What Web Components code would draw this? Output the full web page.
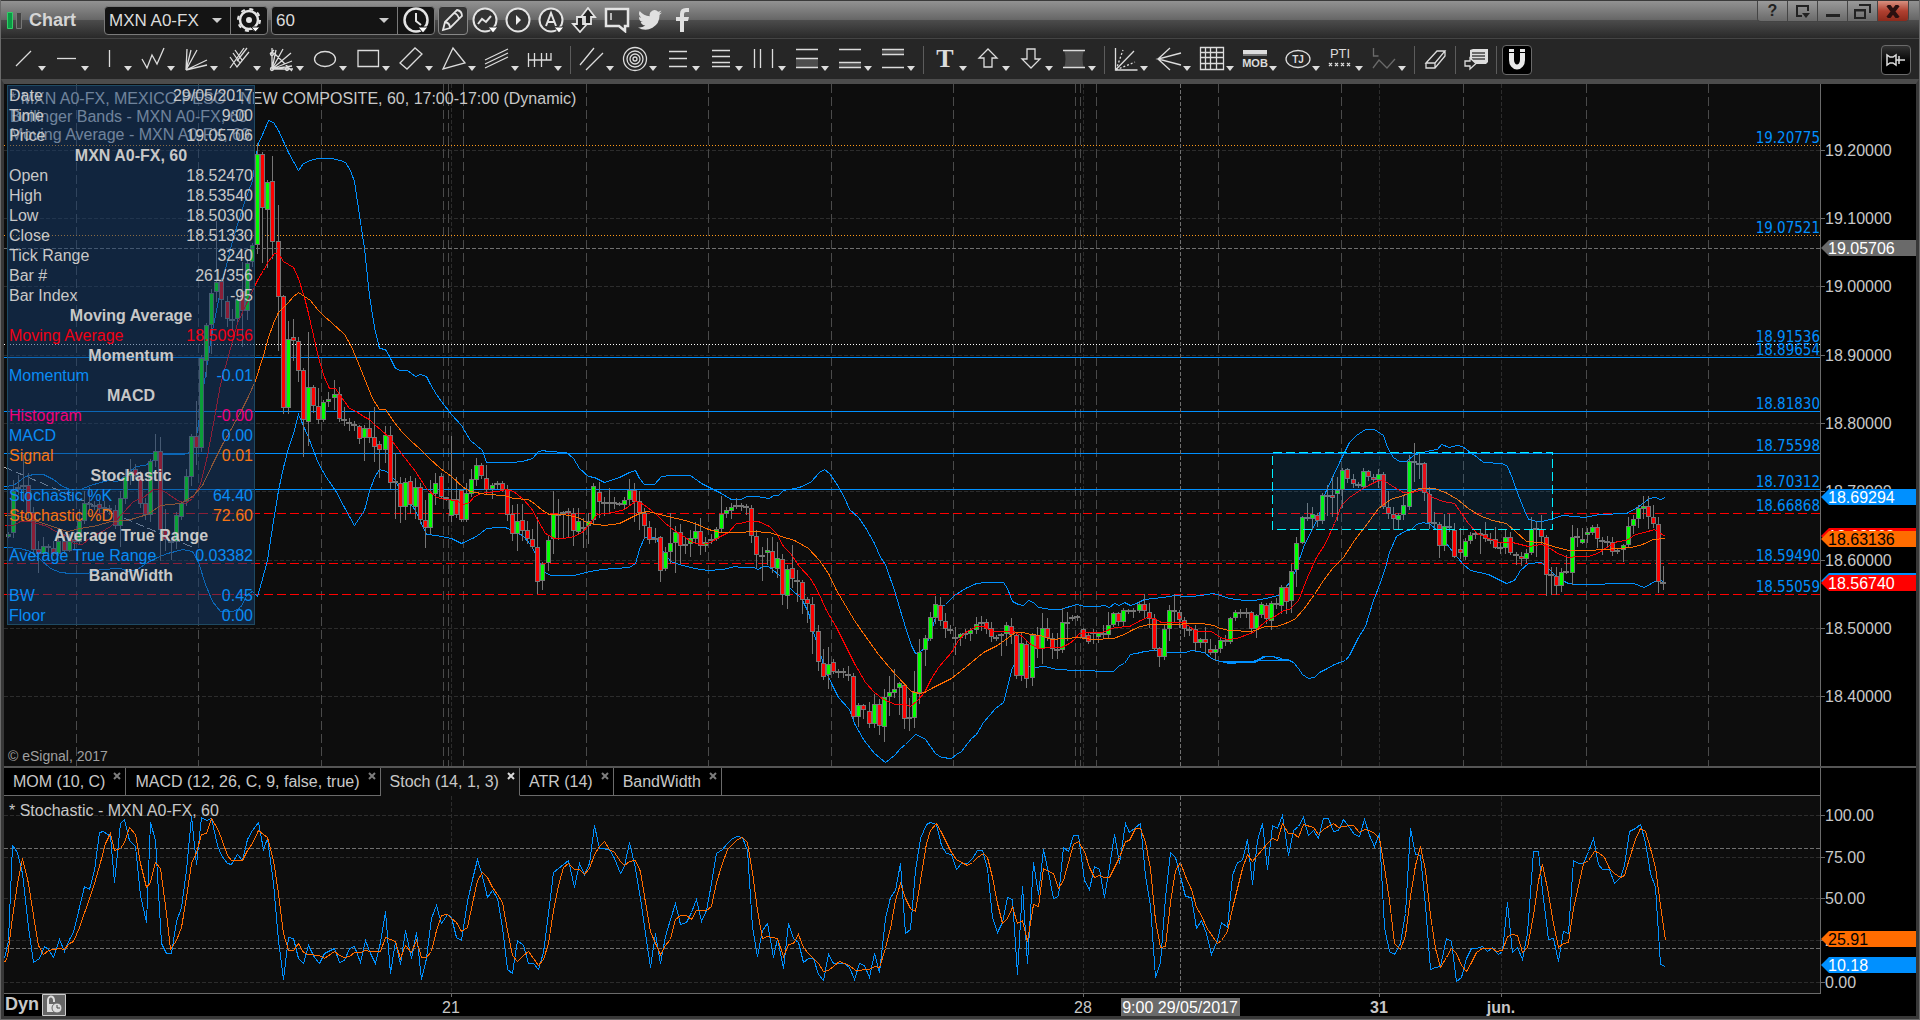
<!DOCTYPE html>
<html lang="es">
<head>
<meta charset="utf-8">
<title>Chart - MXN A0-FX</title>
<style>
html,body{margin:0;height:100%;background:#000}
body{font-family:"Liberation Sans",Arial,sans-serif;color:#c8c8c8;font-size:16px}
</style>
</head>
<body>
<chart-window></chart-window>
<script>
const define=(name,css,html,ready)=>{
  const t=document.createElement('template');
  t.innerHTML='<style>*{box-sizing:border-box}'+css+'</style>'+html;
  customElements.define(name,class extends HTMLElement{
    constructor(){super();this.attachShadow({mode:'open'}).append(t.content.cloneNode(true));}
    connectedCallback(){if(ready&&!this.done){this.done=true;ready.call(this,this.shadowRoot);}}
  });
};
const BTN='button{appearance:none;background:none;border:0;padding:0;margin:0;color:inherit;font:inherit;display:flex;align-items:center}';

/* ---------- series: each chunk is [originX, originY, scaleX, scaleY, points] ---------- */
const C4=[-4,-4,3,2.8],C5=[236,16,2.8,3],C6=[736,336,2.8,3],C7=[1216,316,2.24,3];
const S1=[-4,-56,2.1778,3],S2=[476,4,2.529,3],S3=[896,4,3,3],S4=[1276,-6,2.45,3];
const trace=(chunks)=>chunks.map(([o,s])=>s.trim().split(/\s+/).map(p=>{
  const [x,y]=p.split(',').map(Number);
  return Math.round(o[0]+x/o[2])+.5+','+(Math.round(o[1]+y/o[3])+.5);
}).join(' ')).join(' ');
const line=(chunks,c)=>`<polyline points="${trace(chunks)}" fill="none" stroke="${c}"/>`;

const upper=[[C4,'12,1137 40,1133 75,1110 100,1102 130,1102 160,1118 185,1138 210,1145 240,1145 270,1135 300,1125 325,1120 350,1122 375,1105 405,1080 435,1078 465,1058 490,1047 515,1048 550,1048 575,1040 590,980 610,860 635,700 665,560 700,440 730,350 757,280'],
[C5,'45,160 49,130 63,97 78,60 91,66 105,90 120,123 134,157 149,182 163,209 177,190 196,181 215,175 255,175 280,180 293,187 307,210 320,242 334,345 348,445 362,585 376,680 390,745 405,746 418,768 433,805 447,811 467,811 490,828 505,823 520,829 533,852 548,882 563,903 592,943 620,975 645,1020 678,1051 690,1086 747,1087 762,1085 790,1083 818,1073 833,1054 848,1051 860,1054 913,1057 933,1074 950,1103 975,1129 990,1130 1018,1147 1062,1132 1090,1115 1105,1111 1118,1133 1132,1153 1160,1153 1180,1129 1205,1126 1260,1126 1290,1150 1340,1177 1375,1197 1395,1198'],
[C6,'0,238 20,229 45,228 80,234 92,226 105,225 120,210 150,203 165,202 195,186 220,157 234,148 250,160 270,190 290,232 305,267 330,290 350,320 375,370 392,412 407,432 430,510 445,560 465,630 480,675 491,698 505,693 519,680 533,640 547,590 561,562 575,553 600,525 630,503 660,489 690,485 735,485 748,503 762,542 778,552 792,556 806,541 820,545 835,562 870,568 895,568 940,553 965,559 1000,559 1020,556 1034,560 1048,549 1062,554 1076,545 1091,556 1110,548 1130,537 1160,535 1200,529 1219,526 1240,527 1262,529 1290,524 1325,520 1345,524 1370,533 1410,541 1440,541 1470,533 1505,526 1525,505 1545,470 1555,450'],
[C7,'185,440 205,385 220,350 235,275 250,230 268,180 288,125 305,105 324,88 345,88 365,105 375,140 388,170 400,182 416,183 432,165 445,158 470,151 485,148 496,132 512,140 528,136 543,137 560,155 575,172 590,187 632,190 643,198 655,235 668,285 680,330 690,357 710,364 722,362 745,355 765,346 795,347 815,352 850,342 910,340 935,322 962,293 975,292 985,296 997,292']];
const lower=[[C4,'12,1307 60,1310 90,1318 120,1340 150,1365 180,1377 210,1380 260,1380 300,1370 360,1365 385,1375 410,1370 440,1350 470,1335 500,1325 525,1318 545,1312 575,1320 595,1350 615,1410 635,1460 660,1488 700,1488 720,1475 740,1440 757,1430 770,1445'],
[C5,'60,1445 75,1380 90,1280 105,1170 120,1100 133,1045 148,1000 163,943 190,1010 219,1090 240,1130 265,1170 290,1222 320,1274 348,1230 362,1172 376,1130 390,1108 410,1112 430,1137 450,1172 490,1230 520,1303 548,1305 592,1315 620,1330 655,1310 672,1300 690,1284 720,1280 742,1280 790,1305 815,1335 833,1380 850,1415 870,1426 935,1426 965,1415 1010,1408 1090,1400 1105,1390 1118,1348 1132,1312 1163,1312 1180,1345 1205,1382 1230,1392 1270,1405 1310,1411 1350,1408 1387,1397'],
[C6,'0,440 35,440 50,448 62,438 78,437 90,447 110,465 125,490 145,510 170,535 190,575 205,635 220,690 234,740 255,790 275,830 305,868 320,910 345,958 375,1000 405,1025 432,1005 447,985 463,973 491,943 505,947 519,958 547,998 563,1010 592,1015 605,1003 620,993 648,955 662,943 680,905 715,863 735,845 748,800 762,740 770,730 820,742 855,739 885,746 940,750 1045,752 1060,735 1076,730 1091,701 1108,700 1130,694 1160,691 1190,695 1210,697 1245,697 1262,691 1300,697 1320,713 1345,724 1370,728 1440,724 1465,709 1480,707 1505,710 1520,718 1535,719'],
[C7,'0,784 30,787 78,785 92,775 103,767 122,769 130,776 150,778 163,787 175,805 183,823 197,835 210,830 222,817 240,805 255,792 280,780 290,765 308,710 325,678 343,600 358,545 370,500 378,455 395,407 412,392 428,387 440,373 455,367 470,373 485,390 505,427 530,470 545,493 560,510 600,522 640,548 658,540 672,510 690,488 720,487 735,505 750,525 765,540 780,549 800,552 925,550 950,562 965,548 980,537 997,545']];
const fastMa=[[C4,'12,1247 40,1247 60,1235 85,1235 110,1240 140,1248 165,1262 200,1278 220,1297 245,1300 270,1280 300,1265 330,1250 370,1210 400,1180 430,1168 460,1145 480,1145 500,1155 530,1175 555,1185 575,1170 600,1130 620,1050 640,960 660,850 680,780 710,680 740,620 765,570'],
[C5,'50,535 63,510 77,483 95,460 105,460 120,483 149,502 163,535 178,590 190,640 205,705 218,770 234,830 248,865 265,865 276,882 305,925 325,932 345,948 362,957 376,972 395,990 418,1012 450,1060 490,1113 520,1165 548,1192 575,1196 606,1200 625,1213 640,1205 655,1188 675,1178 690,1176 720,1172 745,1168 765,1173 790,1195 815,1225 835,1262 855,1300 880,1315 905,1313 935,1308 960,1293 975,1275 1000,1242 1045,1235 1075,1227 1105,1204 1120,1205 1140,1220 1165,1243 1190,1270 1215,1290 1245,1310 1265,1327 1290,1331 1310,1330 1345,1307 1365,1295 1390,1270'],
[C6,'0,310 20,302 50,302 80,317 100,340 120,378 140,400 165,438 195,475 215,510 240,570 265,615 290,670 320,730 350,785 375,815 400,837 435,853 463,852 477,858 495,840 515,815 535,773 555,740 590,695 610,660 630,636 660,619 680,619 705,634 765,634 790,648 810,668 835,685 870,680 900,682 920,668 935,657 950,640 980,637 1010,636 1050,622 1090,619 1120,600 1140,592 1160,593 1180,607 1205,605 1235,606 1255,615 1275,632 1320,632'],
[C7,'0,710 15,716 35,713 75,695 100,662 125,645 140,630 155,627 175,600 195,530 215,470 235,430 255,370 270,315 290,290 315,267 335,253 355,240 370,243 390,262 410,275 430,275 455,268 475,290 500,303 525,310 535,330 555,370 575,400 600,415 625,425 655,427 690,439 720,433 740,445 755,460 780,470 800,467 825,469 845,458 870,438 890,422 910,420 930,403 950,396 973,388 997,408']];
const slowMa=[[C4,'12,1218 50,1218 90,1228 130,1240 165,1252 200,1262 240,1255 290,1245 330,1235 380,1232 440,1215 480,1190 540,1185 575,1165 605,1135 635,1075 665,1020 690,980 720,930 745,885 765,840'],
[C5,'63,765 77,710 91,668 105,637 120,620 133,605 145,590 163,577 178,587 195,600 215,628 234,648 255,665 290,703 308,733 325,775 348,835 370,895 390,926 405,928 430,965 450,993 475,1020 505,1048 530,1075 560,1105 592,1128 625,1160 645,1172 690,1183 740,1184 765,1193 805,1198 825,1212 845,1230 865,1241 905,1243 945,1250 975,1270 1020,1276 1060,1270 1090,1255 1118,1239 1140,1234 1165,1238 1195,1247 1245,1260 1280,1273 1310,1287 1345,1296 1390,1297'],
[C6,'0,337 30,334 80,335 115,348 150,360 190,383 220,420 245,460 270,510 295,555 320,600 345,640 385,702 435,763 480,813 500,820 515,817 540,802 590,775 630,742 680,696 720,674 750,650 770,637 790,635 815,643 840,645 870,658 945,652 985,656 1045,655 1075,642 1095,629 1120,617 1145,613 1230,613 1245,610 1290,610 1325,616'],
[C7,'0,685 20,690 70,692 100,679 125,678 145,668 165,658 185,627 210,583 230,540 250,505 275,470 300,420 330,370 355,325 380,297 410,285 430,274 445,263 480,264 505,277 530,297 555,325 580,345 610,360 640,370 660,393 685,423 720,425 745,437 780,450 825,451 860,447 920,440 945,432 970,417 997,415']];
const stochK=[[S1,'9,655 17,600 27,315 38,337 49,400 60,560 71,667 84,654 95,618 105,627 116,650 128,597 139,633 150,598 160,577 172,500 183,438 194,447 205,390 215,275 225,274 239,288 249,425 261,248 271,238 282,300 295,318 305,465 317,545 327,247 338,300 350,608 361,640 372,640 383,542 394,500 405,390 416,228 427,373 438,230 449,240 460,234 472,315 482,345 494,370 504,373 516,343 527,360 538,297 549,270 561,245 572,328 582,293 594,430 605,600 616,716 627,590 638,593 650,653 660,668 671,615 683,650 694,668 705,640 727,623 738,667 750,660 761,625 772,617 783,665 794,600 805,640 816,668 828,605 838,512 849,700 860,602 871,673 883,571 894,653 905,575 916,716 927,655 938,535 949,495 961,550 973,523 983,530 994,592 1005,600 1016,483 1027,417 1038,358 1049,407 1061,470 1072,450 1083,475 1094,560 1105,688 1116,700 1127,600 1138,615 1149,670 1160,670 1172,686 1183,635 1194,520 1205,397 1216,385 1237,360 1249,440 1260,368'],
[S2,'262,222 275,188 288,75 300,145 326,147 339,173 353,220 365,198 378,127 391,205 404,295 417,400 429,500 443,398 456,490 468,408 481,357 494,308 507,371 520,365 533,335 546,298 559,363 572,330 585,250 598,160 611,148 624,128 637,115 650,109 663,112 676,150 687,380 701,467 714,390 727,368 740,472 752,415 766,505 778,370 791,413 804,427 816,485 829,473 843,473 856,523 868,540 881,463 894,490 920,490 933,500 946,538 959,488 972,495 985,532 997,458 1010,517 1023,355 1036,290 1050,270 1062,190 1075,400 1088,387 1101,210 1113,115 1127,71 1139,66'],
[S3,'107,72 122,135 137,160 154,163 169,207 184,190 200,188 215,175 230,150 245,150 260,205 275,350 291,397 306,365 321,292 337,298 352,523 367,258 382,490 398,185 413,283 428,147 443,215 458,294 474,289 488,140 505,152 520,105 535,106 551,240 566,267 582,198 597,206 612,292 627,200 643,103 658,190 674,70 688,97 704,80 719,68 734,225 750,315 765,530 780,487 796,290 811,157 826,170 841,228 856,288 872,290 887,385 903,360 918,400 934,462 950,420 964,367 980,380 995,225 1010,185 1025,180 1040,117 1055,252 1071,120 1086,68 1102,208 1117,75 1132,83 1147,45 1163,165 1178,90 1193,77 1208,52 1224,105 1239,90 1254,115 1270,53 1285,55 1300,93 1315,90 1330,57 1346,80 1362,102 1377,108 1393,58 1408,105 1423,138 1438,98 1452,380 1468,452 1483,463'],
[S4,'294,460 306,370 318,115 330,193 343,195 355,345 368,537 380,530 393,528 406,443 418,452 431,572 443,560 455,505 467,475 480,475 494,467 507,482 519,472 533,492 543,483 555,335 568,487 581,470 593,507 606,430 619,184 631,184 643,300 656,448 668,443 681,513 693,423 706,430 719,211 730,220 742,220 755,183 768,145 780,222 790,236 806,237 818,278 832,262 844,225 856,122 870,113 881,103 895,155 907,250 918,290 930,522 943,527']];
const stochD=[[S1,'9,665 15,650 27,530 38,430 49,353 60,430 71,525 83,615 93,643 105,630 128,625 139,628 150,608 160,603 172,560 194,475 205,430 217,365 228,310 239,280 249,330 261,325 271,305 282,262 293,282 305,370 317,440 327,425 338,367 349,385 361,520 371,628 383,600 394,560 405,470 416,370 427,335 438,283 449,280 460,235 472,265 482,295 494,345 504,360 527,360 538,330 549,310 561,270 572,283 582,290 594,360 605,460 616,580 627,630 638,630 650,610 660,635 671,643 694,645 705,653 727,633 738,645 750,650 761,647 772,635 783,635 794,630 805,632 827,633 838,590 849,597 860,603 871,653 883,615 894,635 905,600 916,650 927,650 938,633 949,570 961,525 973,523 983,535 994,545 1005,572 1016,560 1027,490 1038,420 1049,395 1061,410 1072,440 1083,463 1094,487 1105,570 1116,645 1127,663 1138,645 1149,633 1160,655 1172,675 1183,657 1194,610 1205,510 1216,435 1227,380 1237,370 1249,387 1260,388'],
[S2,'262,222 275,203 288,163 300,138 314,124 326,147 339,155 353,183 365,195 378,182 393,180 404,213 417,305 430,393 443,430 456,462 468,435 481,418 494,357 507,344 520,346 533,356 546,331 572,331 585,318 598,245 611,190 624,147 650,118 663,112 676,125 688,215 701,330 714,415 727,409 750,415 766,467 778,431 791,430 804,403 816,440 829,460 856,490 868,512 881,509 908,484 933,494 948,511 985,506 997,497 1010,502 1023,445 1036,385 1050,300 1062,250 1075,293 1088,325 1101,332 1113,240 1127,130 1139,90'],
[S3,'107,70 122,95 137,125 154,155 169,177 184,187 200,195 215,185 230,172 248,158 262,170 275,230 291,310 306,370 321,353 337,320 352,370 367,360 382,423 398,312 413,318 428,205 443,214 460,218 474,265 488,240 505,187 520,133 535,122 551,152 566,200 582,232 597,226 612,232 627,232 643,200 658,170 674,123 688,120 704,83 719,83 734,125 750,205 765,360 780,440 796,437 811,305 826,210 841,185 856,228 872,268 887,322 903,345 918,380 950,428 964,420 980,393 995,325 1010,265 1025,205 1040,162 1055,182 1071,165 1102,130 1117,115 1132,120 1147,68 1163,98 1178,100 1193,110 1208,73 1239,82 1254,103 1270,87 1300,70 1315,80 1346,76 1358,76 1377,97 1393,88 1408,90 1423,100 1438,113 1452,200 1468,300 1483,430'],
[S4,'294,478 306,435 318,318 330,225 343,167 355,240 368,375 380,475 393,532 406,500 418,475 431,490 443,525 455,542 467,515 480,487 494,475 519,475 530,482 543,480 555,437 568,433 581,434 593,487 606,470 619,375 631,270 643,222 656,310 668,400 681,470 693,460 706,457 719,355 742,220 755,210 770,182 780,185 793,202 806,235 818,250 832,260 844,255 856,205 870,147 881,113 895,123 907,175 918,230 930,345 943,450']];

/* candles: high, body top, body bottom, low, kind (g up, r down, d flat); first value is the bar index */
const candles=[[C4,-230,'1265,1270,1278,1280,g 1120,1150,1265,1280,g 1105,1140,1144,1160,d 1050,1135,1139,1180,d 1100,1133,1210,1225,r 1195,1210,1312,1320,r 1290,1312,1325,1378,r 1280,1306,1325,1330,g 1300,1306,1310,1325,d 1290,1310,1325,1330,r 1275,1292,1325,1330,g 1270,1292,1315,1325,r 1270,1290,1315,1320,g 1265,1285,1290,1310,r 1200,1235,1290,1300,g 1150,1185,1232,1240,g 1140,1185,1190,1200,d 1180,1190,1194,1200,d 1180,1188,1198,1210,r 1180,1195,1199,1210,d 1190,1198,1203,1215,d 1190,1203,1247,1255,r 1150,1170,1247,1305,g 1090,1108,1170,1185,g 1060,1095,1105,1130,g 1075,1090,1105,1115,r 1095,1105,1183,1195,r 1170,1185,1215,1230,r 1060,1067,1215,1235,g 990,1040,1063,1080,g 1000,1040,1258,1345,r 1200,1258,1285,1315,r 1285,1290,1295,1340,d 1210,1218,1290,1310,g 1180,1185,1220,1230,g 1090,1110,1180,1190,g 990,998,1110,1135,g 900,998,1028,1075,r 770,777,1028,1040,g 680,687,785,830,g 585,595,683,765,g 395,565,590,620,g 555,563,613,660,r 605,620,667,690,r 640,668,672,700,d 605,613,667,680,g 510,590,645,745,r 500,513,645,670,g 455,463,508,520,g'],
[C5,-181,'130,163,432,460,g 155,163,322,485,r 240,247,328,500,g 168,244,422,473,r 315,422,587,750,r 585,589,920,938,r 662,716,922,938,g 657,712,720,780,r 710,724,811,842,r 805,811,958,1067,r 695,860,962,1035,g 855,860,916,935,r 865,919,958,970,r 900,907,958,962,g 875,896,904,917,g 840,881,892,926,g 862,881,955,963,r 922,957,961,975,d 955,966,970,990,d 962,972,976,990,d 975,979,1015,1030,r 975,983,1012,1080,g 935,983,1010,1025,r 922,1012,1037,1083,r 1022,1033,1048,1130,r 978,1006,1048,1085,g 978,1006,1145,1163,r 1060,1144,1148,1253,d 1130,1150,1217,1265,r 1135,1145,1217,1257,g 1128,1143,1213,1240,r 1135,1162,1217,1253,g 1150,1162,1258,1270,r 1200,1260,1282,1340,r 1140,1180,1282,1298,g 1120,1150,1178,1212,g 1118,1127,1189,1195,r 1190,1192,1196,1200,d 1008,1197,1246,1262,g 1130,1197,1243,1250,r 1168,1171,1256,1263,r 1150,1180,1256,1263,g 1107,1138,1178,1187,g 1075,1096,1136,1155,g 1090,1096,1124,1135,r 1095,1133,1168,1180,r 1150,1155,1163,1193,g 1143,1150,1154,1163,d 1143,1150,1168,1172,r 1155,1168,1241,1260,r 1215,1242,1298,1320,r 1212,1263,1298,1350,g 1212,1261,1289,1320,r 1262,1291,1315,1330,r 1287,1318,1339,1345,r 1251,1342,1444,1478,r 1385,1393,1441,1466,g 1305,1321,1387,1410,g 1173,1241,1315,1360,g 1197,1241,1245,1318,d 1232,1237,1241,1315,d 1224,1234,1238,1310,d 1225,1238,1291,1335,r 1225,1262,1294,1300,g 1255,1280,1284,1341,d 1240,1262,1276,1330,g 1150,1159,1258,1270,g 1147,1177,1204,1250,r 1190,1207,1211,1245,d 1165,1207,1211,1240,d 1190,1207,1211,1225,d 1205,1209,1213,1215,d 1190,1201,1213,1225,g 1138,1171,1198,1215,g 1150,1171,1202,1262,r 1172,1202,1236,1287,r 1225,1239,1276,1315,r 1262,1282,1318,1330,r 1285,1314,1318,1325,d 1307,1312,1409,1442,r 1340,1357,1403,1410,g 1240,1328,1352,1390,g 1278,1297,1326,1415,g 1272,1297,1336,1388,r 1310,1333,1337,1360,d 1290,1315,1330,1368,g 1265,1294,1315,1330,g 1255,1294,1336,1362,r 1310,1325,1336,1352,g 1302,1318,1322,1330,d 1280,1286,1315,1320,g 1188,1241,1285,1295,g 1220,1229,1238,1250,g 1210,1220,1229,1253,g 1195,1216,1220,1225,d 1210,1216,1220,1230,d 1212,1219,1223,1243,d 1215,1225,1306,1325,r 1290,1309,1363,1400,r 1340,1366,1370,1440,d 1315,1351,1357,1392,g 1312,1352,1402,1415,r 1325,1375,1405,1430,g 1362,1376,1483,1512,r 1395,1408,1486,1525,g 1335,1405,1435,1462,r'],
[C6,-75,'450,481,485,543,d 480,487,536,578,r 530,538,550,605,r 530,553,632,700,r 615,634,724,750,r 687,730,769,778,r 680,733,763,803,g 717,727,754,758,r 747,753,757,770,d 745,753,757,770,d 738,763,767,780,d 758,769,889,895,r 850,856,889,917,g 852,856,868,895,r 845,874,910,922,r 822,853,910,920,g 838,853,916,942,r 807,832,919,963,g 768,817,829,885,g 747,808,815,832,g 785,790,802,883,g 790,796,895,923,r 835,892,896,930,d 753,815,892,920,g 657,697,815,848,g 645,655,688,735,g 577,592,653,660,g 528,553,592,610,g 530,556,601,615,r 580,604,625,650,r 615,628,632,640,d 620,652,656,702,d 638,643,652,675,g 628,640,644,655,d 625,631,640,660,g 592,613,628,640,g 588,606,610,630,d 598,607,625,640,r 605,625,649,662,r 645,652,656,660,d 640,643,647,705,d 605,616,640,675,g 595,619,643,668,r 640,646,766,775,r 640,670,766,780,g 663,673,775,800,r 640,646,772,795,g 622,646,685,712,r 579,625,685,730,g 593,625,652,660,r 640,655,685,713,r 640,686,690,713,d 565,607,688,695,g 577,607,611,660,d 585,592,596,600,d 585,589,593,600,d 625,628,652,655,r 640,646,664,668,r 628,637,641,668,d 635,640,649,665,g 615,640,644,650,d 577,616,643,650,g 575,580,613,618,g 575,580,604,615,r 565,571,604,618,g 568,571,575,580,d 563,571,575,590,d 543,553,570,575,g 522,553,571,590,r 548,577,595,620,r 583,598,685,690,r 680,685,709,738,r 612,628,709,718,g 555,571,625,660,g 522,571,575,605,d 570,577,598,620,r 590,601,625,647,r 620,627,631,645,d 615,628,667,690,r 655,658,667,680,g 620,658,667,695,r 658,688,697,703,r 675,688,697,720,g 650,661,685,697,g 645,661,665,675,d 590,595,664,670,g 570,577,592,600,g 568,577,581,590,d 563,577,581,590,d 573,577,625,637,r 583,586,625,650,g 545,553,583,590,g 548,556,595,610,r 543,550,601,627,g 533,549,553,565,d 495,500,556,578,g 495,500,544,580,r 432,454,541,575,g 350,370,448,497,g'],
[C7,24,'347,352,427,430,g 310,350,354,360,d 320,343,355,387,g 338,345,361,378,r 280,286,361,370,g 255,284,288,345,d 228,286,292,348,r 232,269,279,360,g 205,211,268,320,g 205,208,233,245,r 222,236,250,260,r 245,253,257,260,d 205,214,257,265,g 210,214,229,240,r 222,230,238,245,r 207,223,238,260,g 217,223,317,325,r 273,320,340,355,r 322,343,355,388,r 340,346,356,388,g 285,314,343,358,g 165,184,317,328,g 128,184,188,243,d 160,188,192,233,d 185,190,277,300,r 262,283,367,385,r 335,367,371,380,d 365,373,436,470,r 343,379,436,450,g 342,379,383,392,d 370,391,467,472,r 385,448,457,475,r 415,424,469,478,g 395,406,421,430,g 393,400,404,413,d 390,400,404,460,d 365,401,415,423,r 400,416,420,430,d 382,416,440,445,r 425,442,446,460,d 388,412,441,460,g 395,412,457,463,r 455,461,465,493,d 455,467,475,495,r 448,459,475,485,g 350,386,457,462,g 362,384,388,468,d 345,386,409,430,r 405,412,523,584,r 500,523,527,583,d 500,529,556,582,r 505,515,556,572,g 465,513,517,520,d 375,412,515,552,g 385,409,413,438,d 383,418,425,430,g 383,397,403,425,g 375,382,395,402,g 373,382,415,440,r 412,419,423,463,d 408,424,428,438,d 412,427,454,465,r 445,450,454,460,d 433,436,448,482,g 350,379,433,440,g 345,358,376,400,g 315,325,355,382,g 288,317,323,355,g 288,317,349,385,r 315,352,370,380,r 350,371,544,577,r 498,547,551,567,d']];
const drawCandles=()=>{
  let s='';
  for(const [o,first,list] of candles) list.split(' ').forEach((c,n)=>{
    const v=c.split(','),k=v[4];
    const [h,t,b,l]=v.slice(0,4).map(y=>Math.round(o[1]+y/o[3]));
    const x=Math.floor(1175.8+(first+n)*5.0947);
    s+=`<path fill="#767676" d="M${x} ${h}h1V${l+1}h-1z"/>`;
    if(k==='d') s+=`<path fill="#767676" d="M${x-3} ${t}h6v2h-6z"/>`;
    else{
      const e=Math.max(b+1,t+3);
      s+=`<path fill="#767676" d="M${x-2} ${t}h5V${e}h-5z"/><path fill="${k==='g'?'#0f0':'#f00'}" d="M${x-1} ${t+1}h3V${e-1}h-3z"/>`;
    }
  });
  return s;
};
const hl=(y,c,dash='')=>`<path d="M0 ${y+.5}H4000" stroke="${c}" stroke-dasharray="${dash}"/>`;
const vl=(x,c,dash='')=>`<path d="M${x+.5} 0V2000" stroke="${c}" stroke-dasharray="${dash}"/>`;

/* ---------- price plot ---------- */
define('price-plot',
`:host{display:block;position:relative;flex:1;min-width:0;background:#0d0d0d;overflow:hidden}
svg{display:block;position:absolute;inset:0;width:100%;height:100%;shape-rendering:crispEdges}
.lv{fill:#0090ff;font:15px "DejaVu Sans Condensed","DejaVu Sans",sans-serif;text-anchor:end}
.legend{margin:0;padding:6px 6px;line-height:18px;white-space:pre;position:relative}
.copy{position:absolute;left:4px;bottom:2px;font-size:14px;line-height:16px;color:#a0a0a0}`,
`<svg></svg><p class="legend">* MXN A0-FX, MEXICO PESO - NEW COMPOSITE, 60, 17:00-17:00 (Dynamic)
Bollinger Bands - MXN A0-FX, 60
Moving Average - MXN A0-FX, 60</p><slot></slot><span class="copy">© eSignal, 2017</span>`,
function(r){
  let s='';
  for(const y of [66,134,202,271,339,407,476,544,612]) s+=hl(y,'#2c2c2c','4 2');
  for(const x of [447,1079,1375,1497]) s+=vl(x,'#2c2c2c','4 2');
  for(const x of [72,194,317,439,444,459,582,704,827,949,1071,1076,1092,1214,1337,1459,1582,1704]) s+=vl(x,'#4a4a4a','9 4');
  s+=hl(61,'#ff9a1a','1 2')+hl(151,'#ff9a1a','1 2')+hl(260,'#fff','1 2');
  for(const y of [273,327,369,405]) s+=hl(y,'#0090ff');
  for(const y of [429,479,510]) s+=hl(y,'#f00','9 4');
  s+='<path d="M0 383L188 463" stroke="#b4b4b4" stroke-dasharray="9 4"/>';
  s+=line(upper,'#0090ff')+line(lower,'#0090ff')+drawCandles()+line(fastMa,'#f00')+line(slowMa,'#ff6c00');
  s+='<path d="M1268.5 368.5H1548.5V445.5H1268.5z" fill="#0090ff" fill-opacity=".1" stroke="#00f0ff" stroke-dasharray="9 4"/>';
  s+=hl(164,'#707070','4 2')+vl(1176,'#707070','4 2');
  for(const [y,t] of [[61,'19.20775'],[151,'19.07521'],[260,'18.91536'],[273,'18.89654'],[327,'18.81830'],[369,'18.75598'],[405,'18.70312'],[429,'18.66868'],[479,'18.59490'],[510,'18.55059']])
    s+=`<text class="lv" x="100%" y="${y-2}">${t}</text>`;
  r.querySelector('svg').innerHTML=s;
});

/* ---------- vertical scale, shared by both panes ---------- */
define('value-axis',
`:host{display:block;flex:0 0 96px;background:#000;border-left:1px solid #6a6a6a;position:relative;box-sizing:border-box}
svg{display:block;position:absolute;inset:0;width:100%;height:100%;font:16px "Liberation Sans",Arial,sans-serif}`,
`<svg></svg>`,
function(r){
  let s='';
  for(const t of (this.getAttribute('ticks')||'').split(' ').filter(Boolean)){
    const [y,l]=t.split('|');
    s+=`<path d="M0 ${+y+.5}h4" stroke="#6a6a6a"/><text x="4" y="${+y+6}" fill="#c8c8c8">${l}</text>`;
  }
  for(const t of (this.getAttribute('tags')||'').split(' ').filter(Boolean)){
    const [y,l,bg,fg]=t.split('|');
    s+=`<path d="M0 ${+y+8}l8-8H400v16H8z" fill="${bg}"/><text x="7" y="${+y+14}" fill="${fg}">${l}</text>`;
  }
  r.querySelector('svg').innerHTML=s;
});

/* ---------- floating cursor data window ---------- */
define('data-window',
`:host{display:block;position:absolute;left:3px;top:1px;width:248px;height:540px;overflow:hidden;box-sizing:border-box;background:rgba(21,61,111,.5);border:1px solid #1f4a63}
table{border-collapse:collapse;width:100%;line-height:20px}
td,th{padding:0 1px;height:20px;text-align:left;font-weight:400;white-space:nowrap}
td{text-align:right}th.h{text-align:center;font-weight:700}`,
`<table aria-label="Cursor data"></table>`,
function(r){
  const B='#0a8cf5',R='#f00014',O='#f57514';
  const rows=[['Date','29/05/2017'],['Time','9:00'],['Price','19.05706'],['MXN A0-FX, 60'],['Open','18.52470'],['High','18.53540'],['Low','18.50300'],['Close','18.51330'],['Tick Range','3240'],['Bar #','261/356'],['Bar Index','-95'],['Moving Average'],['Moving Average','18.50956',R],['Momentum'],['Momentum','-0.01',B],['MACD'],['Histogram','-0.00','#f0007d'],['MACD','0.00',B],['Signal','0.01',O],['Stochastic'],['Stochastic %K','64.40',B],['Stochastic %D','72.60',O],['Average True Range'],['Average True Range','0.03382',B],['BandWidth'],['BW','0.45',B],['Floor','0.00',B]];
  r.querySelector('table').innerHTML=rows.map(([a,b,c])=>b===undefined?`<tr><th class="h" colspan="2">${a}</th></tr>`:`<tr style="color:${c||'inherit'}"><th>${a}</th><td>${b}</td></tr>`).join('');
});

/* ---------- study tabs ---------- */
define('study-tab',
`:host{display:flex;height:28px;box-sizing:border-box;background:#000;border-right:1px solid #6a6a6a;border-bottom:1px solid #6a6a6a;padding:0 4px 0 9px}
:host([active]){background:#0d0d0d;border-bottom-color:#0d0d0d}`+BTN+
`button{line-height:29px;white-space:nowrap}.x{align-self:flex-start;margin:2px 0 0 8px;line-height:12px;height:12px;color:#7d7d7d}
:host([active]) .x{color:#d8d8d8}`,
`<button role="tab"><slot></slot></button><button class="x" aria-label="Close"><svg width="8" height="8" stroke="currentColor" stroke-width="2"><path d="M1 1l6 6M7 1L1 7"/></svg></button>`);
define('study-tabs',
`:host{display:flex;background:#000}.t{flex:1;display:flex;min-width:0}.rest{flex:1;border-bottom:1px solid #6a6a6a}.ax{flex:0 0 96px;border-left:1px solid #6a6a6a}`,
`<div class="t" role="tablist"><slot></slot><span class="rest"></span></div><span class="ax"></span>`);

/* ---------- stochastic plot ---------- */
define('stoch-plot',
`:host{display:block;position:relative;flex:1;min-width:0;background:#0d0d0d;overflow:hidden}
svg{display:block;position:absolute;inset:0;width:100%;height:100%;shape-rendering:crispEdges}
p{margin:0;position:relative;padding:6px 5px;line-height:18px}`,
`<svg></svg><p>* Stochastic - MXN A0-FX, 60</p>`,
function(r){
  let s='';
  for(const y of [19,61,102,144,186]) s+=hl(y,'#2c2c2c','4 2');
  for(const y of [52,152]) s+=hl(y,'#707070','4 2');
  for(const x of [447,1079,1375,1497]) s+=vl(x,'#2c2c2c','4 2');
  s+=line(stochK,'#0090ff')+line(stochD,'#ff6c00')+vl(1176,'#707070','4 2');
  r.querySelector('svg').innerHTML=s;
});

/* ---------- time scale ---------- */
define('time-axis',
`:host{display:flex;height:23px;background:#000;position:relative}
.line{position:absolute;left:0;right:95px;top:0;border-top:1px solid #6a6a6a}
svg{position:absolute;inset:0;width:100%;height:100%;font:16px "Liberation Sans",Arial,sans-serif;text-anchor:middle}
.dyn{position:relative;display:flex;align-items:center;font-size:18px;font-weight:700;line-height:25px;gap:3px;padding-left:1px}`+BTN,
`<svg></svg><span class="line"></span><span class="dyn"><span>Dyn</span><button aria-label="Lock time template"><svg style="position:static;width:24px;height:22px" viewBox="0 0 24 22"><path d="M.5.5h23v21H.5z" fill="#666" stroke="#ccc"/><path d="M6 10V7a3 4 0 0 1 6-1v2" fill="none" stroke="#ddd" stroke-width="2"/><path d="M5 10h8v8H5z" fill="#ddd"/><circle cx="15" cy="14" r="5" fill="#ddd" stroke="#666"/><path d="M15 11v3h3" stroke="#444" fill="none"/></svg></button></span>`,
function(r){
  r.querySelector('svg').innerHTML=[[447,'21',0],[1079,'28',0],[1375,'31',1],[1497,'jun.',1]].map(([x,t,b])=>`<path d="M${x+.5} 0v4" stroke="#6a6a6a"/><text x="${x}" y="20" fill="#c8c8c8" font-weight="${b?700:400}">${t}</text>`).join('')
   +'<path d="M1117 5h119v18h-119z" fill="#6a6a6a"/><text x="1176" y="20" fill="#fff">9:00 29/05/2017</text>';
});

/* ---------- drawing tools ---------- */
const P=d=>`<path d="${d}"/>`,F='fill="#4d4d4d" stroke="none"';
const icons={
line:P('M8 21L23 6'),hline:P('M6 13.5h19'),vline:P('M15.5 5v17'),
zigzag:P('M5 14l5 9 5-13 5 9 7-16'),
fan:P('M6 25L7 4M6 25L11 5M6 25L17 5M6 25L27 15M6 25L27 20'),
fork:P('M7 23L21 3M7 12l7 10L26 7M12 5l7 10M10 8l7 10M14 16L24 3'),
gann:P('M6 3v21h21M6 24L10 5M6 24L17 4M6 24L25 8M6 24l20-8M6 24l20-3M8 8l14 14M4 9l4-4M22 22l4 4')+'<circle cx="6" cy="9" r="1.5"/><circle cx="6" cy="24" r="1.5"/><circle cx="21" cy="24" r="1.5"/>',
ellipse:'<ellipse cx="16" cy="14" rx="10.5" ry="7.5"/>',rect:P('M6 5.5h20.500v16H6z'),
para:P('M5 18L20 3l7 6-15 15z'),tri:P('M5 24L15 3l12 15z'),
regress:P('M4 15L27 4M4 19L27 8M4 23L27 12'),
cycle:P('M4.500 8v14M4 15h19M10.500 8v14M17.500 8v14M23 15h4V8M22.500 8v7'),
parallel:P('M4 20L18 3M10 25L27 8'),
rings:'<circle cx="16" cy="14" r="11.500"/><circle cx="16" cy="14" r="8"/><circle cx="16" cy="14" r="5"/><circle cx="16" cy="14" r="2"/>',
lines3:P('M7 6.500h18M7 13.500h18M7 21.500h18'),lines4:P('M7 5.500h18M7 11.500h18M7 17.500h18M7 21.500h18'),
bars:P('M6.500 4v19M12.500 4v19M24.500 4v19'),
fibr:`<path ${F} d="M5 13h22v9H5z"/>`+P('M5 4.500h22M5 13.500h22M5 22.500h22'),
fibe:`<path ${F} d="M5 18h22v4H5z"/>`+P('M5 4.500h22M5 17.500h22M5 22.500h22'),
fibx:`<path ${F} d="M5 5h22v4H5z"/>`+P('M5 4.500h22M5 9.500h22M5 22.500h22'),
text:'<text class="serif" x="16" y="22" font-weight="700" font-size="26">T</text>',
up:P('M16 4l9 9h-5v9h-8v-9H7z'),down:P('M16 23l9-9h-5V4h-8v10H7z'),
scroll:`<path ${F} d="M6 5q3 9 0 18h20q-3-9 0-18z"/>`+P('M5 5.500h22M5 22.500h22'),
speed:P('M5.500 3v22h22M5.500 25L24 6')+'<path stroke-dasharray="2 2" d="M6 25L13 5M6 25l19-8"/>',
gfan:P('M17 3L5 14l12 11M28 8L5 14l23 6'),
grid:P('M4.500 2.500h23v22h-23zM9.500 2v23M14.500 2v23M20.500 2v23M4 7.500h23M4 12.500h23M4 18.500h23'),
mob:'<path d="M4 5h24v4H4z" fill="#ddd" stroke="none"/><path d="M4 9h24v2H4z" fill="#777" stroke="none"/><text x="16" y="22" font-size="11" font-weight="700">MOB</text>',
tj:'<ellipse cx="16" cy="14" rx="12" ry="8.500"/><text x="16" y="18" font-size="10" font-weight="700">TJ</text>',
pti:'<text x="15" y="13" font-size="13">PTI</text>'+P('M4 18l3 3m0-3l-3 3M10 18l3 3m0-3l-3 3M16 18l3 3m0-3l-3 3M22 18l3 3m0-3l-3 3'),
lz:'<g stroke="#6a6a6a">'+P('M5.500 3v8h5M5 23l6-8 8 8 8-9')+'</g>',
eraser:P('M6 18L17 6h8L15 18zM6 18v5h9l10-12V6M15 18v5'),
note:'<path d="M9 5l3-1h15v13l-2 2H9z" fill="#ddd" stroke="none"/><path d="M11 8h13M11 11h13M11 14h13" stroke="#444"/><path d="M4 16h5v-3l6 5.500-6 5.500v-3H4z" fill="#262626"/>'
};
define('tool-button',
`:host{display:block}`+BTN+`button{width:43px;height:38px}:host([plain]) button{width:32px}
.i{width:31px;height:30px;flex:none;overflow:visible}.c{margin-left:-1px;margin-top:18px}:host([plain]) .c{display:none}
.i{fill:none;stroke:#dcdcdc;stroke-width:1.300}.i text{fill:#dcdcdc;stroke:none;text-anchor:middle;font-family:"Liberation Sans",sans-serif}.i text.serif{font-family:"Liberation Serif",serif}`,
`<button><svg class="i" viewBox="0 0 31 30"></svg><svg class="c" width="8" height="5"><path d="M0 0h8L4 5z" fill="#dcdcdc"/></svg></button>`,
function(r){const n=this.getAttribute('icon');r.querySelector('.i').innerHTML=icons[n];r.querySelector('button').setAttribute('aria-label',n);});
define('drawing-toolbar',
`:host{display:flex;align-items:center;height:40px;box-sizing:border-box;background:#262626;padding:1px 8px 0 7px}
.s{flex:0 0 9px;height:28px;align-self:center;background:linear-gradient(90deg,transparent 3px,#5c5c5c 3px 4px,transparent 4px)}
.g{display:flex}`+BTN+`.box{width:30px;height:30px;border:1px solid #6a6a6a;border-radius:4px;background:#000;justify-content:center}.pin{margin-left:auto;background:linear-gradient(#333,#000 60%)}`,
`<div class="g"></div><button class="box" aria-label="Magnet"><svg width="20" height="24" fill="none" stroke="#e8e8e8" stroke-width="5"><path d="M4.500 1v11a5.500 7 0 0 0 11 0V1"/><path d="M1 4.500h18" stroke="#000" stroke-width="1"/></svg></button><button class="box pin" aria-label="Pin"><svg width="22" height="16" fill="none" stroke="#ddd" stroke-width="1.500"><path d="M2 3v10l3-2h3l3 2V3L8 5H5zM14 4v8M11 8h9"/></svg></button>`,
function(r){
  const groups=['line hline vline zigzag fan fork gann ellipse rect para tri regress cycle','parallel rings lines3 lines4 bars fibr fibe fibx','text up down scroll','speed gfan grid mob tj pti lz','eraser','note'];
  r.querySelector('.g').innerHTML=groups.map((g,n)=>g.split(' ').map(i=>`<tool-button icon="${i}" ${n>3?'plain':''}></tool-button>`).join('')+'<span class="s"></span>').join('');
});

/* ---------- title bar ---------- */
define('title-bar',
`:host{display:flex;align-items:center;height:38px;box-sizing:border-box;padding:3px 10px 1px 6px;background:linear-gradient(#3a3a3a 0 1px,#929292 1px,#666 20px,#4c4c4c 20px,#292929 100%)}
h1{font-size:18px;margin:0 28px 0 7px;color:#d6d6d6;line-height:24px}`+BTN+`
.combo{display:flex;height:29px;border:1px solid #7a7a7a;border-radius:4px;background:#141414;margin-right:3px;align-items:stretch}
.sel{position:relative;display:flex;align-items:center;border-right:1px solid #7a7a7a}
select{appearance:none;border:0;background:none;color:#dcdcdc;font:17px "Liberation Sans",Arial,sans-serif;width:125px;height:27px;padding:0 20px 0 4px;margin:0}
.sel svg{position:absolute;right:8px;pointer-events:none}
.combo button{width:36px;justify-content:center}
.pen{width:30px;height:29px;border:1px solid #888;border-radius:4px;background:#333;justify-content:center;margin:0}
.q{width:33px;height:30px;justify-content:center}
.win{display:flex;margin-left:auto;align-self:flex-start;margin-top:-2px;border:1px solid #444;border-top:0;border-radius:0 0 4px 4px;overflow:hidden}
.win button{width:30px;height:20px;justify-content:center;border-right:1px solid #444;background:linear-gradient(#9a9a9a,#6a6a6a);color:#222}
.win button:last-child{border:0;background:linear-gradient(#d89080,#b04030 50%,#8c2a1c);font-weight:700}
svg.s{fill:none;stroke:#e4e4e4;stroke-width:2}`,
`<svg width="15" height="17"><path d="M.5.5h5v16h-5z" fill="#0a9a44" stroke="#3c6"/><path d="M9.500.5h5v16h-5z" fill="#444" stroke="#777"/></svg><h1>Chart</h1>
<div class="combo"><span class="sel"><select aria-label="Symbol"><option>MXN A0-FX</option></select><svg width="10" height="5"><path d="M0 0h10L5 5z" fill="#ccc"/></svg></span>
<button aria-label="Settings"><svg class="s" width="26" height="26"><circle cx="13" cy="13" r="9" stroke-width="2.500"/><circle cx="13" cy="13" r="11" stroke-width="2" stroke-dasharray="4 4.640"/><circle cx="13" cy="13" r="2" fill="#e4e4e4"/><path d="M15 20h9l-4.500 5z" fill="#fff" stroke="#141414" stroke-width="1"/></svg></button></div>
<div class="combo"><span class="sel"><select aria-label="Interval"><option>60</option></select><svg width="10" height="5"><path d="M0 0h10L5 5z" fill="#ccc"/></svg></span>
<button aria-label="Time template"><svg class="s" width="28" height="26"><circle cx="14" cy="13" r="11.500" stroke-width="2.500"/><path d="M14 6v8l5 4"/><path d="M16 20h10l-5 6z" fill="#fff" stroke="#141414" stroke-width="1"/></svg></button></div>
<button class="pen" aria-label="Draw"><svg class="s" width="24" height="25" style="stroke-width:1.800"><path d="M2 22l2-8L16 2q5 1 5 6L9 20zM13 5q4 1 5 6M4 14q5 1 5 6"/></svg></button>
<button class="q" aria-label="Studies"><svg class="s" width="26" height="26"><circle cx="13" cy="13" r="11.500" fill="#333"/><path d="M6 17l4-5 4 3 5-6"/><path d="M16 20h10l-5 6z" fill="#fff" stroke="#333" stroke-width="1"/></svg></button>
<button class="q" aria-label="Replay"><svg class="s" width="26" height="26"><circle cx="13" cy="13" r="11.500" fill="#333"/><path d="M11 8v10l5-5z" fill="#eee" stroke="none"/></svg></button>
<button class="q" aria-label="Annotate"><svg class="s" width="26" height="26"><circle cx="13" cy="13" r="11.500" fill="#333"/><path d="M8 19l5-13 5 13M10 15h6"/><path d="M16 20h10l-5 6z" fill="#fff" stroke="#333" stroke-width="1"/></svg></button>
<button class="q" aria-label="Trade"><svg class="s" width="26" height="26" style="stroke-width:1.800"><path d="M17 1l7 9h-4v7h-6v-7h-4z" fill="#222"/><path d="M9 25l7-8h-4v-7H6v7H2z" fill="#222"/></svg></button>
<button class="q" aria-label="Chat"><svg class="s" width="26" height="26" style="stroke-width:2.500"><path d="M2 2h22v17h-3v5l-6-5H2z" fill="#3a3a3a"/><path d="M7 6v7" stroke-width="1.500"/></svg></button>
<button class="q" aria-label="Twitter"><svg width="24" height="22" viewBox="0 0 24 20"><path fill="#e0e0e0" d="M24 2.400a9.800 9.800 0 0 1-2.800.8A4.900 4.900 0 0 0 23.300.500a9.900 9.900 0 0 1-3.100 1.200 4.900 4.900 0 0 0-8.400 4.500A14 14 0 0 1 1.700 1a4.900 4.900 0 0 0 1.500 6.600A4.900 4.900 0 0 1 1 7a4.900 4.900 0 0 0 3.900 4.900 5 5 0 0 1-2.200.1 4.900 4.900 0 0 0 4.600 3.400A9.900 9.900 0 0 1 0 17.400 14 14 0 0 0 21.500 5z"/></svg></button>
<button class="q" aria-label="Facebook"><svg width="14" height="24"><path fill="#e0e0e0" d="M4 24V13H0V9h4V6q0-6 6-6h3v4h-3q-2 0-2 2v3h5l-1 4H8v11z"/></svg></button>
<div class="win"><button aria-label="Help"><b>?</b></button><button aria-label="Dock"><svg width="18" height="15" fill="none" stroke="#222" stroke-width="2"><path d="M3 1v11h5M2 2h12v5"/><path d="M8 9h8l-4 5z" fill="#222" stroke="none"/></svg></button><button aria-label="Minimize"><svg width="14" height="14"><path d="M0 10h14v3H0z" fill="#222"/></svg></button><button aria-label="Restore"><svg width="17" height="15" fill="none" stroke="#222" stroke-width="2"><path d="M1 6h10v8H1zM5 1h11v8"/><path d="M1 6.500h10"/></svg></button><button aria-label="Close"><svg width="14" height="13" stroke="#2a1010" stroke-width="4"><path d="M2 0l10 13M12 0L2 13"/></svg></button></div>`);

/* ---------- window ---------- */
define('chart-window',
`:host{display:flex;flex-direction:column;box-sizing:border-box;min-height:100vh;background:#444;border:1px solid #6a6a6a;border-top:0}
title-bar,drawing-toolbar,study-tabs,time-axis{flex:none}
drawing-toolbar{margin-top:1px}
.body{flex:1;display:flex;flex-direction:column;border:3px solid #383838;border-top:5px solid #4c4c4c}
.row{display:flex}.price{flex:1;min-height:300px;border-bottom:2px solid #555;position:relative}.stoch{flex:0 0 197px}`,
`<title-bar></title-bar><drawing-toolbar></drawing-toolbar>
<main class="body">
<section class="row price"><price-plot><data-window></data-window></price-plot><value-axis ticks="66|19.20000 134|19.10000 202|19.00000 271|18.90000 339|18.80000 407|18.70000 476|18.60000 544|18.50000 612|18.40000" tags="156|19.05706|#6a6a6a|#fff 405|18.69294|#0090ff|#fff 444|18.63568|#f00|#fff 447|18.63136|#ff6c00|#000 489|18.56940|#0090ff|#fff 491|18.56740|#f00|#fff"></value-axis></section>
<study-tabs><study-tab>MOM (10, C)</study-tab><study-tab>MACD (12, 26, C, 9, false, true)</study-tab><study-tab active>Stoch (14, 1, 3)</study-tab><study-tab>ATR (14)</study-tab><study-tab>BandWidth</study-tab></study-tabs>
<section class="row stoch"><stoch-plot></stoch-plot><value-axis ticks="19|100.00 61|75.00 102|50.00 144|25.00 186|0.00" tags="135|25.91|#ff6c00|#000 161|10.18|#0090ff|#fff"></value-axis></section>
<time-axis></time-axis>
</main>`);
</script>
</body>
</html>
